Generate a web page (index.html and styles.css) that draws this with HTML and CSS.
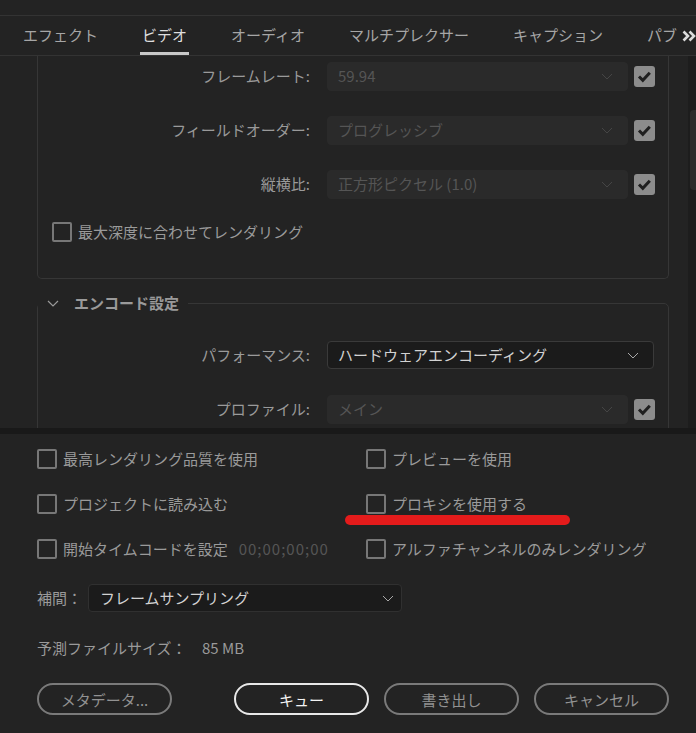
FILE: index.html
```html
<!DOCTYPE html>
<html lang="ja">
<head>
    <meta charset="UTF-8">
    <title>書き出し設定</title>
    <link rel="stylesheet" href="styles.css">
</head>
<body>
    <div class="top-strip"></div>
    <nav class="tabs">
        <div class="tab-list">
            <span class="tab">エフェクト</span>
            <span class="tab active">ビデオ</span>
            <span class="tab">オーディオ</span>
            <span class="tab">マルチプレクサー</span>
            <span class="tab">キャプション</span>
            <span class="tab">パブ</span>
        </div>
        <svg class="tabs-more" width="14" height="12" viewBox="0 0 14 12"><path d="M1.5 1.5l4.5 4.5-4.5 4.5M7.5 1.5l4.5 4.5-4.5 4.5" fill="none" stroke="#dcdcdc" stroke-width="2.6"/></svg>
    </nav>

    <div class="scroll-area">
        <div class="scroll-content">
            <div class="panel">
                <div class="form-row">
                    <span class="form-label">フレームレート:</span>
                    <div class="select disabled"><span>59.94</span><svg class="chev" width="12" height="7" viewBox="0 0 12 7"><path d="M1 1l5 5 5-5" fill="none" stroke="currentColor"/></svg></div>
                    <span class="check checked"><svg width="21" height="21" viewBox="0 0 21 21"><path d="M5 10.5l3.8 3.8 7-7.5" fill="none" stroke="#1f1f1f" stroke-width="3"/></svg></span>
                </div>
                <div class="form-row">
                    <span class="form-label">フィールドオーダー:</span>
                    <div class="select disabled"><span>プログレッシブ</span><svg class="chev" width="12" height="7" viewBox="0 0 12 7"><path d="M1 1l5 5 5-5" fill="none" stroke="currentColor"/></svg></div>
                    <span class="check checked"><svg width="21" height="21" viewBox="0 0 21 21"><path d="M5 10.5l3.8 3.8 7-7.5" fill="none" stroke="#1f1f1f" stroke-width="3"/></svg></span>
                </div>
                <div class="form-row">
                    <span class="form-label">縦横比:</span>
                    <div class="select disabled"><span>正方形ピクセル (1.0)</span><svg class="chev" width="12" height="7" viewBox="0 0 12 7"><path d="M1 1l5 5 5-5" fill="none" stroke="currentColor"/></svg></div>
                    <span class="check checked"><svg width="21" height="21" viewBox="0 0 21 21"><path d="M5 10.5l3.8 3.8 7-7.5" fill="none" stroke="#1f1f1f" stroke-width="3"/></svg></span>
                </div>
                <div class="option panel-option"><span class="box"></span>最大深度に合わせてレンダリング</div>
            </div>

            <fieldset class="section">
                <legend class="section-title">
                    <svg width="12" height="7" viewBox="0 0 12 7"><path d="M1 1l5 5 5-5" fill="none" stroke="#9a9a9a" stroke-width="1.2"/></svg>
                    エンコード設定
                </legend>
                <div class="form-row first">
                    <span class="form-label">パフォーマンス:</span>
                    <div class="select wide"><span>ハードウェアエンコーディング</span><svg class="chev" width="12" height="7" viewBox="0 0 12 7"><path d="M1 1l5 5 5-5" fill="none" stroke="currentColor"/></svg></div>
                </div>
                <div class="form-row">
                    <span class="form-label">プロファイル:</span>
                    <div class="select disabled"><span>メイン</span><svg class="chev" width="12" height="7" viewBox="0 0 12 7"><path d="M1 1l5 5 5-5" fill="none" stroke="currentColor"/></svg></div>
                    <span class="check checked"><svg width="21" height="21" viewBox="0 0 21 21"><path d="M5 10.5l3.8 3.8 7-7.5" fill="none" stroke="#1f1f1f" stroke-width="3"/></svg></span>
                </div>
            </fieldset>
        </div>
        <div class="scroll-track"><div class="scroll-thumb"></div></div>
    </div>

    <div class="divider"></div>

    <div class="bottom">
        <div class="options">
            <div class="option"><span class="box"></span>最高レンダリング品質を使用</div>
            <div class="option"><span class="box"></span>プレビューを使用</div>
            <div class="option"><span class="box"></span>プロジェクトに読み込む</div>
            <div class="option"><span class="box"></span>プロキシを使用する</div>
            <div class="option"><span class="box"></span>開始タイムコードを設定<span class="timecode">00;00;00;00</span></div>
            <div class="option"><span class="box"></span>アルファチャンネルのみレンダリング</div>
        </div>

        <div class="interp-row">
            <span>補間：</span>
            <div class="select interp"><span>フレームサンプリング</span><svg class="chev" width="12" height="7" viewBox="0 0 12 7"><path d="M1 1l5 5 5-5" fill="none" stroke="currentColor"/></svg></div>
        </div>

        <div class="size-row">
            <span>予測ファイルサイズ：</span>
            <span class="size-value">85 MB</span>
        </div>

        <div class="buttons">
            <button class="btn">メタデータ...</button>
            <div class="btn-group">
                <button class="btn primary">キュー</button>
                <button class="btn">書き出し</button>
                <button class="btn">キャンセル</button>
            </div>
        </div>
    </div>

    <div class="annotation"></div>
</body>
</html>
```

FILE: styles.css
```css
body {
    margin: 0;
    width: 696px;
    height: 733px;
    overflow: hidden;
    position: relative;
    background-color: #232323;
    color: #9a9a9a;
    font-family: "Noto Sans CJK JP", "Noto Sans", sans-serif;
    font-size: 15px;
    line-height: 20px;
}
.top-strip {
    height: 15px;
    border-bottom: 1px solid #333;
}
.tabs {
    display: flex;
    height: 39px;
    border-bottom: 1px solid #333;
    overflow: hidden;
}
.tab-list {
    display: flex;
    gap: 40px;
    padding-left: 21px;
    width: 663px;
    overflow: hidden;
    white-space: nowrap;
}
.tab {
    padding: 8px 2px 4px;
    line-height: 22px;
    border-bottom: 3px solid transparent;
    color: #a6a6a6;
}
.tab.active {
    color: #dedede;
    border-bottom-color: #c8c8c8;
}
.tabs-more {
    margin-top: 14px;
    flex-shrink: 0;
}
.scroll-area {
    display: flex;
    height: 372px;
    overflow: hidden;
}
.scroll-content {
    flex: 1;
    padding: 0 19px 0 37px;
}
.scroll-track {
    width: 8px;
    background-color: #1d1d1d;
}
.scroll-thumb {
    margin: 54px 0 0 2px;
    height: 80px;
    background-color: #2c2c2c;
    border-radius: 4px 0 0 4px;
}
.panel {
    border: 1px solid #363636;
    border-top: none;
    border-radius: 0 0 5px 5px;
    padding: 5px 0 36px;
}
.form-row {
    display: flex;
    align-items: center;
    height: 30px;
    margin-bottom: 24px;
}
.form-label {
    width: 272px;
    padding-right: 17px;
    text-align: right;
    flex-shrink: 0;
}
.select {
    display: flex;
    align-items: center;
    justify-content: space-between;
    box-sizing: border-box;
    width: 301px;
    height: 29px;
    padding: 0 14px 0 10px;
    border-radius: 4px;
    background-color: #1b1b1b;
    border: 1px solid #3a3a3a;
    color: #d2d2d2;
    white-space: nowrap;
}
.select.disabled {
    background-color: #2a2a2a;
    border-color: #2a2a2a;
    color: #555;
}
.select.disabled .chev {
    color: #454545;
}
.chev {
    color: #a8a8a8;
}
.select.wide {
    width: 327px;
    height: 28px;
}
.check {
    width: 21px;
    height: 21px;
    margin-left: 6px;
    border-radius: 3px;
}
.check.checked {
    background-color: #8c8c8c;
}
.check svg {
    display: block;
}
.option {
    display: flex;
    align-items: center;
    min-height: 20px;
    white-space: nowrap;
}
.box {
    box-sizing: border-box;
    width: 20px;
    height: 20px;
    margin-right: 6px;
    border: 2px solid #777;
    border-radius: 2px;
    flex-shrink: 0;
}
.panel-option {
    padding-left: 14px;
    margin-top: -1px;
}
.section {
    margin: 13px 0 0;
    padding: 0;
    border: 1px solid #363636;
    border-radius: 5px;
    min-width: 0;
}
.section-title {
    display: flex;
    align-items: center;
    gap: 15px;
    padding: 0 9px;
    margin: 0;
    line-height: 22px;
    font-weight: bold;
    color: #9a9a9a;
}
.section .form-row.first {
    margin-top: 27px;
    height: 28px;
    margin-bottom: 25px;
}
.divider {
    height: 6px;
    background-color: #191919;
}
.bottom {
    padding: 15px 27px 0 37px;
}
.options {
    display: grid;
    grid-template-columns: 329px 303px;
    row-gap: 25px;
}
.timecode {
    margin-left: 11px;
    letter-spacing: 1px;
    color: #555;
}
.interp-row {
    display: flex;
    align-items: center;
    margin-top: 25px;
    height: 28px;
}
.select.interp {
    width: 314px;
    height: 28px;
    margin-left: 6px;
    padding: 0 7px 0 11px;
    border-color: #303030;
}
.size-row {
    margin-top: 26px;
}
.size-value {
    margin-left: 12px;
}
.buttons {
    display: flex;
    justify-content: space-between;
    margin-top: 25px;
}
.btn-group {
    display: flex;
    gap: 15px;
}
.btn {
    width: 135px;
    height: 32px;
    border: 2px solid #7a7a7a;
    border-radius: 16px;
    background: transparent;
    color: #929292;
    font-family: inherit;
    font-size: 15px;
    padding: 0;
}
.btn.primary {
    border-color: #e8e8e8;
    color: #f2f2f2;
}
.annotation {
    position: absolute;
    left: 345px;
    top: 515px;
    width: 225px;
    height: 10px;
    border-radius: 5px;
    background-color: #e41b1b;
}
```
